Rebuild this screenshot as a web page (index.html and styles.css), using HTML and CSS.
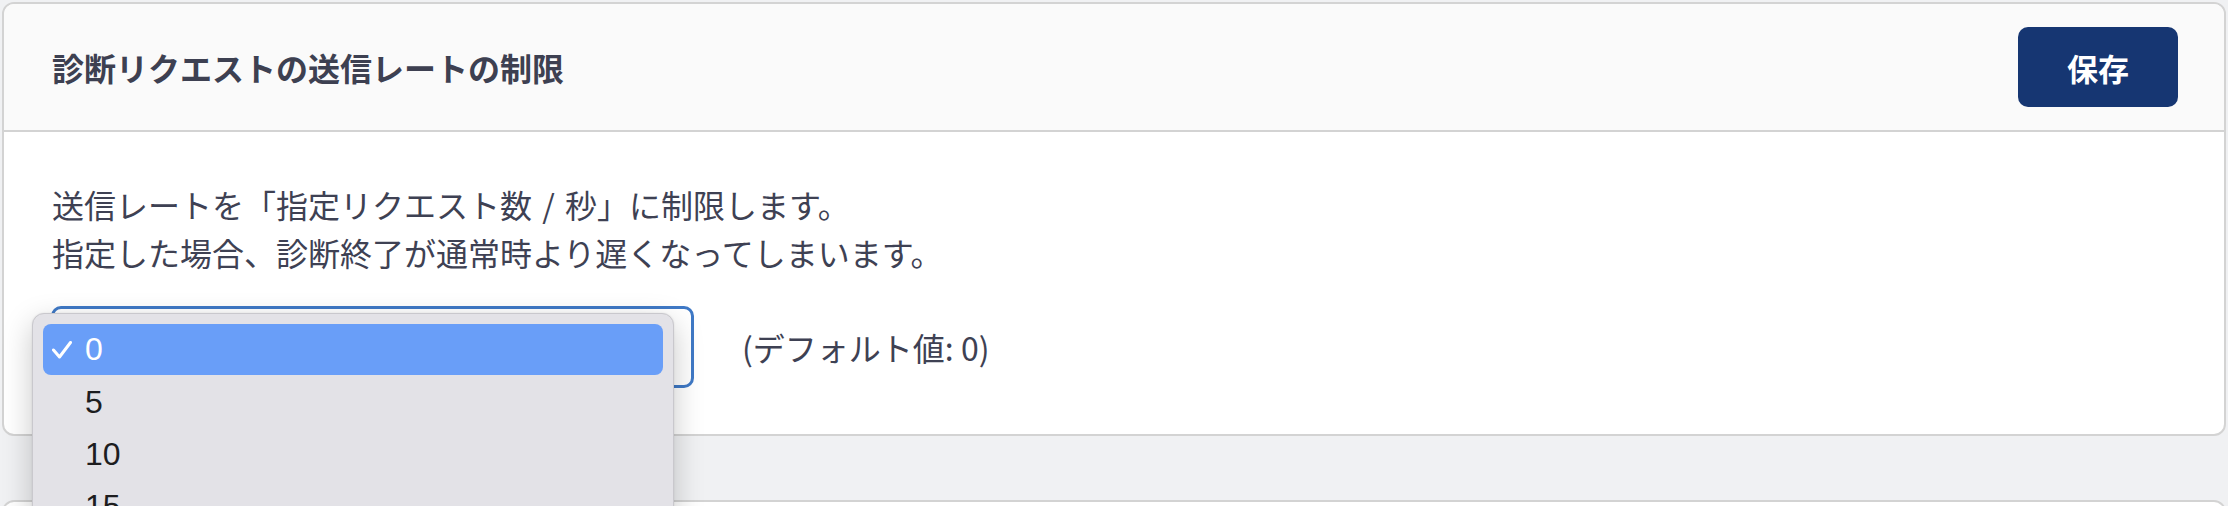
FILE: index.html
```html
<!DOCTYPE html>
<html lang="ja">
<head>
<meta charset="utf-8">
<title>診断リクエストの送信レートの制限</title>
<link rel="stylesheet" href="styles.css">
</head>
<body>
<div class="page">
  <section class="card">
    <header class="card-header">
      <h2 class="card-title">診断リクエストの送信レートの制限</h2>
      <button class="btn-save" type="button">保存</button>
    </header>
    <div class="card-body">
      <p class="desc">送信レートを「指定リクエスト数 / 秒」に制限します。<br>指定した場合、診断終了が通常時より遅くなってしまいます。</p>
      <div class="field">
        <div class="select-wrap">
          <div class="select"><span class="select-value">0</span></div>
          <ul class="menu">
            <li class="menu-item selected">
              <svg class="check" width="20" height="18" viewBox="0 0 20 18"><path d="M1.5 9 L7.5 16 L18.5 1.5" fill="none" stroke="#ffffff" stroke-width="3" stroke-linecap="round" stroke-linejoin="round"/></svg>
              <span>0</span>
            </li>
            <li class="menu-item"><span>5</span></li>
            <li class="menu-item"><span>10</span></li>
            <li class="menu-item"><span>15</span></li>
            <li class="menu-item"><span>20</span></li>
          </ul>
        </div>
        <span class="default-note">(デフォルト値: 0)</span>
      </div>
    </div>
  </section>
  <section class="card card-next"></section>
</div>
</body>
</html>
```

FILE: styles.css
```css
html, body {
  margin: 0;
  padding: 0;
  overflow: hidden;
  height: 506px;
}
body {
  background: #f0f1f3;
  font-family: "Noto Sans CJK JP", "Noto Sans", sans-serif;
  color: #3e4153;
  text-spacing-trim: space-all;
}
.page {
  padding: 2px;
}
.card {
  background: #ffffff;
  border: 2px solid #d3d3d3;
  border-radius: 12px;
}
.card-header {
  box-sizing: border-box;
  height: 128px;
  background: #fafafa;
  border-bottom: 2px solid #d3d3d3;
  border-radius: 10px 10px 0 0;
  display: flex;
  align-items: center;
  justify-content: space-between;
  padding: 0 46px 0 48px;
}
.card-title {
  margin: 0;
  font-size: 32px;
  font-weight: 700;
  color: #3d4051;
  line-height: 1.2;
}
.btn-save {
  width: 160px;
  height: 80px;
  border: none;
  border-radius: 10px;
  background: #163672;
  color: #ffffff;
  font-family: "Noto Sans CJK JP", sans-serif;
  font-size: 31px;
  font-weight: 700;
  padding: 0;
}
.card-body {
  padding: 48px 48px 46px 48px;
}
.desc {
  margin: 0;
  font-size: 32px;
  line-height: 48px;
  word-spacing: 3px;
  color: #3e4153;
}
.field {
  margin-top: 30px;
  display: flex;
  align-items: center;
  gap: 48px;
}
.select-wrap {
  position: relative;
  margin-left: -1px;
}
.select {
  width: 643px;
  height: 82px;
  box-sizing: border-box;
  border: 3px solid #3f79c6;
  border-radius: 10px;
  background: #ffffff;
  display: flex;
  align-items: center;
  padding-left: 30px;
  font-family: "Liberation Sans", sans-serif;
  font-size: 31px;
  color: #222;
}
.menu {
  position: absolute;
  left: -19px;
  top: 7px;
  width: 642px;
  box-sizing: border-box;
  margin: 0;
  padding: 10px;
  list-style: none;
  background: #e3e2e7;
  border: 1px solid #c9c8cd;
  border-radius: 12px;
  box-shadow: 0 10px 30px rgba(0, 0, 0, 0.22), 0 0 2px rgba(0, 0, 0, 0.1);
  z-index: 10;
}
.menu-item {
  position: relative;
  height: 52px;
  border-radius: 8px;
  display: flex;
  align-items: center;
  padding-left: 42px;
  font-family: "Liberation Sans", sans-serif;
  font-size: 32px;
  color: #1d1d1f;
}
.menu-item.selected {
  background: #699ef8;
  color: #ffffff;
  height: 51px;
  margin-bottom: 1px;
}
.check {
  position: absolute;
  left: 9px;
  top: 17px;
}
.default-note {
  font-size: 32px;
  color: #3e4153;
}
.card-next {
  margin-top: 64px;
  height: 40px;
}
```
